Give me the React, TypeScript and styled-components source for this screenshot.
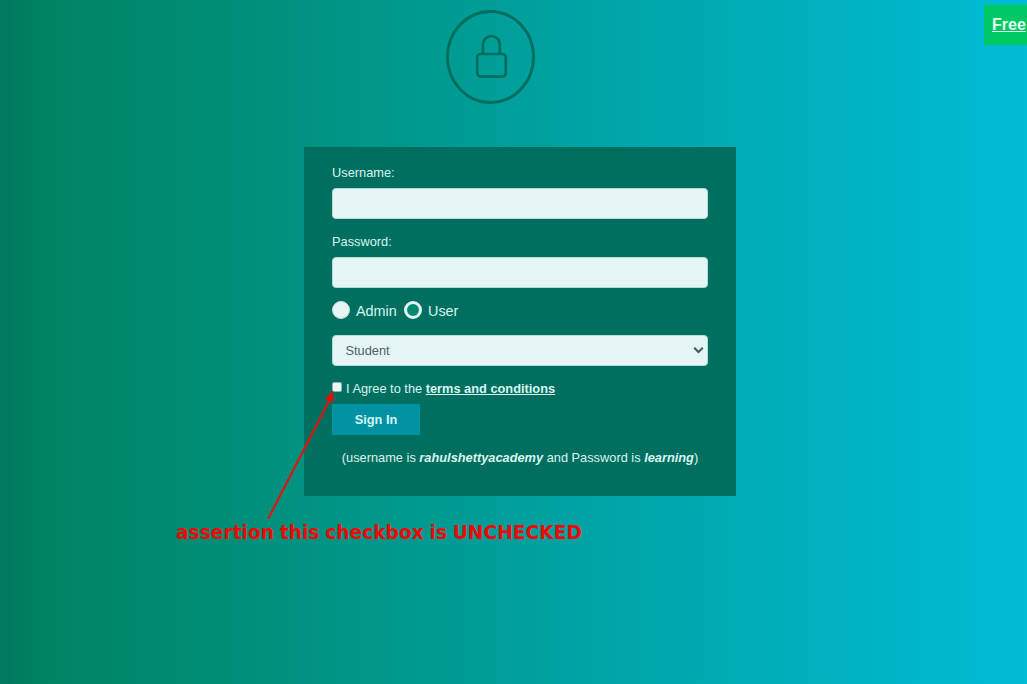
import React from "react";
import styled, { createGlobalStyle } from "styled-components";

const GlobalStyle = createGlobalStyle`
  * { box-sizing: border-box; }
  html, body { margin: 0; padding: 0; overflow: hidden; }
  body { font-family: "Liberation Sans", Arial, sans-serif; }
`;

const Page = styled.main`
  position: relative;
  width: 100%;
  height: 684px;
  overflow: hidden;
  padding-top: 10px;
  background: linear-gradient(to right, #00775e 0%, #008362 4%, #00978a 37%, #00a4a6 58%, #00bcd4 100%);
`;

const LockBadge = styled.svg`
  display: block;
  width: 90px;
  height: 95px;
  margin-left: 446px;
  fill: none;
  stroke: #006e5f;
`;

const Card = styled.form`
  width: 432px;
  height: 349px;
  margin: 42px 0 0 304px;
  padding: 17px 28px 0;
  background: #006f60;
  color: #d8f5f0;
  font-size: 12.8px;
  line-height: 18px;
`;

const Field = styled.label<{ $gap: number }>`
  display: flex;
  flex-direction: column;
  gap: 6px;
  margin-bottom: ${(p) => p.$gap}px;
`;

const TextInput = styled.input`
  width: 100%;
  height: 31px;
  padding: 0 13px;
  border: 1px solid #b3ddd8;
  border-radius: 4px;
  background: #e5f5f5;
  outline: none;
  font: inherit;
`;

const Roles = styled.div`
  display: flex;
  align-items: center;
  height: 20px;
`;

const Role = styled.label<{ $width: number }>`
  display: flex;
  align-items: center;
  gap: 6px;
  width: ${(p) => p.$width}px;
  font-size: 14.4px;
  line-height: 20px;
`;

const RoleName = styled.span`
  padding-top: 1px;
`;

const RadioMark = styled.span<{ $checked?: boolean }>`
  flex: none;
  width: 18px;
  height: 18px;
  border: ${(p) => (p.$checked ? "3px" : "1px")} solid ${(p) => (p.$checked ? "#e0f5f1" : "#c5e3df")};
  border-radius: 50%;
  background: ${(p) => (p.$checked ? "#008a72" : "#e5f5f3")};
`;

const SelectBox = styled.div`
  display: flex;
  align-items: center;
  justify-content: space-between;
  height: 31px;
  margin-top: 15px;
  padding: 0 3px 0 12.5px;
  border: 1px solid #b3ddd8;
  border-radius: 4px;
  background: #e5f5f5;
  color: #4b6265;
`;

const Chevron = styled.svg`
  width: 11px;
  height: 8px;
  margin-top: -1px;
  fill: none;
  stroke: #42595b;
  stroke-width: 2;
`;

const Terms = styled.div`
  display: flex;
  height: 18px;
  margin-top: 14px;
`;

const CheckMark = styled.span`
  width: 10px;
  height: 10px;
  margin: 2px 4px 0 0;
  border: 1px solid #8fb5af;
  border-radius: 2px;
  background: #eaf7f6;
`;

const StrongLink = styled.a`
  color: inherit;
  font-weight: 700;
  text-decoration: underline;
`;

const SignIn = styled.button`
  display: block;
  width: 88px;
  height: 31px;
  margin-top: 6px;
  padding: 0;
  border: 0;
  background: #0092a3;
  color: #d5f5f7;
  font: 700 12.8px "Liberation Sans", Arial, sans-serif;
`;

const Hint = styled.p`
  margin: 14px 0 0;
  text-align: center;
  white-space: nowrap;
`;

const Promo = styled.a`
  position: absolute;
  top: 5px;
  right: 0;
  width: 43px;
  height: 40px;
  padding-left: 8px;
  background: #00c863;
  color: #e2fff2;
  font-size: 16px;
  font-weight: 700;
  line-height: 39px;
  text-decoration: underline;
  white-space: nowrap;
`;

const Arrow = styled.svg`
  position: absolute;
  top: 386px;
  left: 260px;
  width: 80px;
  height: 136px;
`;

const Note = styled.div`
  position: absolute;
  top: 521px;
  left: 176px;
  color: #f00805;
  font: 700 18.67px/24px "DejaVu Sans", sans-serif;
  word-spacing: -0.8px;
  white-space: nowrap;
`;

export default function App() {
  return (
    <>
      <GlobalStyle />
      <Page>
        <LockBadge viewBox="0 0 90 95">
          <ellipse cx="44.5" cy="47" rx="43" ry="45.5" strokeWidth="2.8" />
          <rect x="31.2" y="44" width="28.6" height="22.6" rx="3.5" strokeWidth="2.7" />
          <path d="M37 43.5V34.4a8.4 8.4 0 0 1 16.8 0v9.1" strokeWidth="2.7" />
        </LockBadge>
        <Card>
          <Field $gap={14}>
            Username:
            <TextInput type="text" />
          </Field>
          <Field $gap={12}>
            Password:
            <TextInput type="password" />
          </Field>
          <Roles>
            <Role $width={72}>
              <RadioMark />
              <RoleName>Admin</RoleName>
            </Role>
            <Role $width={60}>
              <RadioMark $checked />
              <RoleName>User</RoleName>
            </Role>
          </Roles>
          <SelectBox role="listbox">
            Student
            <Chevron viewBox="0 0 11 8">
              <path d="M1.2 1.8 5.5 6l4.3-4.2" />
            </Chevron>
          </SelectBox>
          <Terms>
            <CheckMark role="checkbox" aria-checked="false" />
            <span>
              I Agree to the <StrongLink>terms and conditions</StrongLink>
            </span>
          </Terms>
          <SignIn type="button">Sign In</SignIn>
          <Hint>
            (username is <b><i>rahulshettyacademy</i></b> and Password is <b><i>learning</i></b>)
          </Hint>
        </Card>
        <Promo>Free</Promo>
        <Arrow viewBox="0 0 80 136">
          <path d="M8.3 132.5 70 13" stroke="#dc1610" strokeWidth="2.2" />
          <path d="M73.5 5 73 17 65.2 12.8Z" fill="#f00805" />
        </Arrow>
        <Note>assertion this checkbox is UNCHECKED</Note>
      </Page>
    </>
  );
}
